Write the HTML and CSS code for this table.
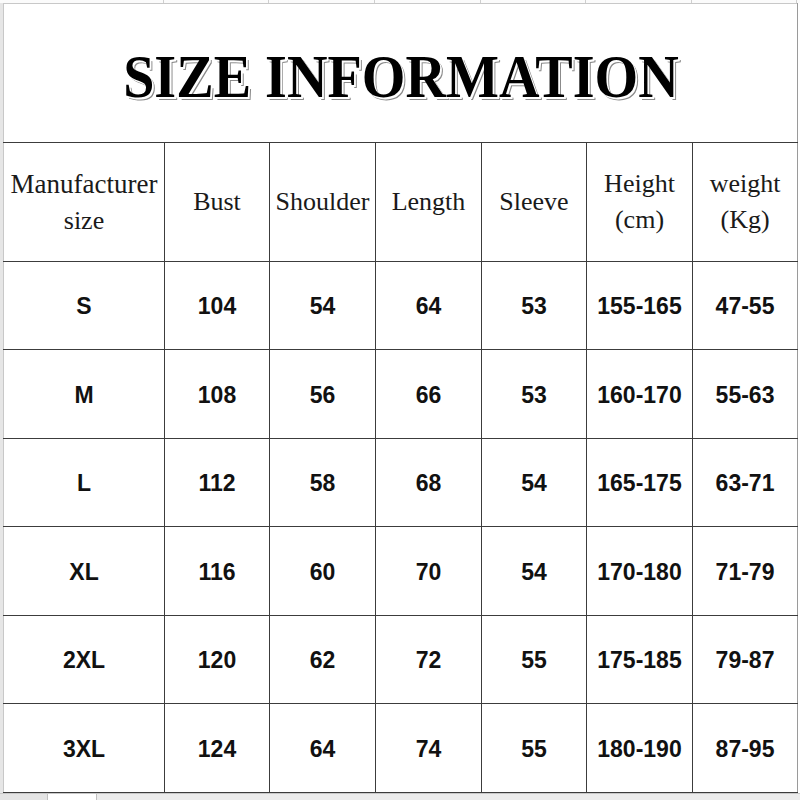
FILE: index.html
```html
<!DOCTYPE html>
<html lang="en">
<head>
<meta charset="utf-8">
<title>Size Information</title>
<link rel="stylesheet" href="styles.css">
</head>
<body>
<div class="page">
  <div class="topstrip">
    <span class="tick c1"></span><span class="tick c2"></span><span class="tick c3"></span><span class="tick c4"></span><span class="tick c5"></span><span class="tick c6"></span><span class="tick c7"></span>
  </div>
  <div class="frame">
    <div class="gutter"></div>
    <table class="sizes">
      <colgroup>
        <col class="w1"><col class="w2"><col class="w3"><col class="w4"><col class="w5"><col class="w6"><col class="w7">
      </colgroup>
      <tr class="title-row">
        <td colspan="7" class="title-cell"><span class="title">SIZE INFORMATION</span></td>
      </tr>
      <tr class="head-row">
        <th><span class="wide">Manufacturer</span><br>size</th>
        <th>Bust</th>
        <th>Shoulder</th>
        <th>Length</th>
        <th>Sleeve</th>
        <th>Height<br>(cm)</th>
        <th>weight<br>(Kg)</th>
      </tr>
      <tr class="row-a"><td>S</td><td>104</td><td>54</td><td>64</td><td>53</td><td>155-165</td><td>47-55</td></tr>
      <tr class="row-b"><td>M</td><td>108</td><td>56</td><td>66</td><td>53</td><td>160-170</td><td>55-63</td></tr>
      <tr class="row-a"><td>L</td><td>112</td><td>58</td><td>68</td><td>54</td><td>165-175</td><td>63-71</td></tr>
      <tr class="row-b"><td>XL</td><td>116</td><td>60</td><td>70</td><td>54</td><td>170-180</td><td>71-79</td></tr>
      <tr class="row-a"><td>2XL</td><td>120</td><td>62</td><td>72</td><td>55</td><td>175-185</td><td>79-87</td></tr>
      <tr class="row-b"><td>3XL</td><td>124</td><td>64</td><td>74</td><td>55</td><td>180-190</td><td>87-95</td></tr>
    </table>
  </div>
  <div class="tabbar">
    <span class="tab-left"></span><span class="tab-active"></span><span class="tab-rest"></span>
  </div>
</div>
</body>
</html>
```

FILE: styles.css
```css
html, body {
  margin: 0;
  padding: 0;
  background: #ffffff;
}

.page {
  width: 800px;
  height: 800px;
  overflow: hidden;
  display: flex;
  flex-direction: column;
}

.topstrip {
  height: 3px;
  display: flex;
  padding-left: 3px;
  background: #fbfbfb;
}

.tick {
  height: 3px;
  box-sizing: border-box;
  border-right: 1px solid #cfcfcf;
}
.tick.c1 { width: 161px; }
.tick.c2 { width: 105px; }
.tick.c3 { width: 106px; }
.tick.c4 { width: 106px; }
.tick.c5 { width: 105px; }
.tick.c6 { width: 106px; }
.tick.c7 { width: 105px; }

.frame {
  display: flex;
  height: 790px;
}

.gutter {
  width: 3px;
  background: #e6e6e6;
}

.sizes {
  width: 794px;
  table-layout: fixed;
  border-collapse: collapse;
  border-spacing: 0;
}

.w1 { width: 161px; }
.w2 { width: 105px; }
.w3 { width: 106px; }
.w4 { width: 106px; }
.w5 { width: 105px; }
.w6 { width: 106px; }
.w7 { width: 105px; }

.sizes td,
.sizes th {
  border: 1px solid #3c3c3c;
  padding: 0;
  text-align: center;
  vertical-align: middle;
}

.title-row { height: 139px; }

.sizes .title-cell {
  border-top: 1px solid #c8c8c8;
  border-left: 1px solid #c8c8c8;
  border-right: 1px solid #9a9a9a;
}

.title {
  display: inline-block;
  font-family: "Liberation Serif", "DejaVu Serif", serif;
  font-weight: 700;
  font-size: 61px;
  line-height: 1;
  color: #000000;
  transform: scaleX(0.92);
  text-shadow: 1px 1px 0 #ffffff, 2px 2px 0 #ffffff, 3px 3px 0 #8a8a8a;
  margin-top: 4px;
}

.head-row { height: 119px; }

.sizes th {
  font-family: "Liberation Serif", "DejaVu Serif", serif;
  font-weight: 400;
  font-size: 26px;
  line-height: 36px;
  color: #1a1a1a;
  white-space: nowrap;
}

.sizes th .wide {
  font-size: 27px;
}

.sizes th:first-child,
.sizes td:first-child {
  border-left: 1px solid #c8c8c8;
}

.sizes th:last-child,
.sizes td:last-child {
  border-right: 1px solid #9a9a9a;
}

.row-a { height: 88px; }
.row-b { height: 89px; }

.sizes td {
  font-family: "Liberation Sans", Arial, sans-serif;
  font-weight: 700;
  font-size: 23px;
  color: #111111;
  padding-top: 2px;
}

.tabbar {
  flex: 1;
  display: flex;
  background: #e4e4e4;
  border-top: 1px solid #c8c8c8;
}

.tab-left {
  width: 47px;
  background: #e4e4e4;
  border-right: 1px solid #c0c0c0;
}

.tab-active {
  width: 48px;
  background: #ffffff;
}

.tab-rest {
  flex: 1;
  background: #ececec;
  border-left: 1px solid #c0c0c0;
}
```
